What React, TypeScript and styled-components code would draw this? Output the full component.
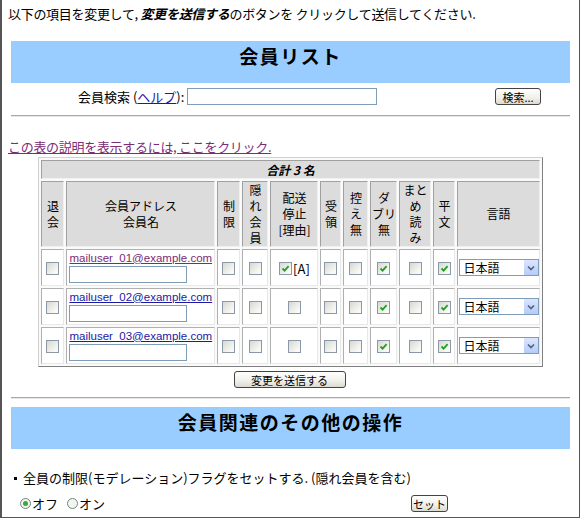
import React from 'react'
import styled, { createGlobalStyle } from 'styled-components'

const GlobalStyle = createGlobalStyle`
  html, body {
    margin: 0;
    padding: 0;
    background: #fff;
  }
  body {
    font-family: "Noto Sans CJK JP", "DejaVu Sans", sans-serif;
    font-size: 13px;
    color: #000;
  }
  * {
    box-sizing: border-box;
  }
`

const Frame = styled.div`
  width: 580px;
  height: 518px;
  border-left: 2px solid #555;
  border-right: 1px solid #555;
  border-bottom: 1px solid #555;
  padding: 0 6px;
  overflow: hidden;
`

const Intro = styled.p`
  margin: 0;
  padding-top: 6px;
  line-height: 16px;
  letter-spacing: -0.3px;
  em {
    font-weight: bold;
    font-style: italic;
  }
`

const SectionBar = styled.div<{ $top: number }>`
  margin: ${({ $top }) => $top}px 3px 0;
  height: 42px;
  background: #99ccff;
  text-align: center;
  padding-top: 3px;
  font-size: 19px;
  font-weight: bold;
  line-height: 24px;
  letter-spacing: 1.5px;
`

const SearchRow = styled.div`
  margin: 5px 3px 0;
  height: 17px;
  display: flex;
  align-items: center;
  justify-content: space-between;
  padding: 0 29px 0 67px;
`

const SearchLabel = styled.label`
  display: flex;
  align-items: center;
  line-height: 17px;
`

const Link = styled.a<{ $visited?: boolean }>`
  color: ${({ $visited }) => ($visited ? '#7b2d74' : '#1a1aa6')};
  text-decoration: underline;
  cursor: pointer;
`

const TextBox = styled.span<{ $w: number }>`
  display: inline-block;
  width: ${({ $w }) => $w}px;
  height: 17px;
  border: 1px solid #7f9db9;
  background: #fff;
`

const XpButton = styled.button<{ $w: number }>`
  width: ${({ $w }) => $w}px;
  height: 17px;
  padding: 0;
  border: 1px solid #444;
  border-radius: 3px;
  background: linear-gradient(#ffffff, #f0efe8 60%, #dcdbd2);
  font-family: "Noto Sans CJK JP", sans-serif;
  font-size: 11px;
  line-height: 14px;
  color: #000;
`

const Rule = styled.hr<{ $top: number }>`
  margin: ${({ $top }) => $top}px 3px 0;
  border: none;
  border-top: 1px solid #a8a8a8;
  border-bottom: 1px solid #e8e8e8;
  height: 0;
`

const HelpLine = styled.div`
  margin-top: 22px;
  line-height: 16px;
  letter-spacing: -0.3px;
`

const MemberTable = styled.table`
  margin: 2px auto 0;
  width: 504px;
  table-layout: fixed;
  border-collapse: separate;
  border-spacing: 2px;
  border: 1px solid;
  border-color: #d0d0d0 #808080 #808080 #d0d0d0;
  background: #fafafa;
`

const TotalCell = styled.th`
  background: #dcdcdc;
  border: 1px solid;
  border-color: #a0a0a0 #f0f0f0 #f0f0f0 #a0a0a0;
  height: 19px;
  font-style: italic;
  font-weight: bold;
  font-size: 12px;
  padding: 0;
  line-height: 16px;
`

const HeadCell = styled.th`
  background: #dcdcdc;
  border: 1px solid;
  border-color: #a0a0a0 #f0f0f0 #f0f0f0 #a0a0a0;
  font-weight: normal;
  font-size: 12px;
  line-height: 16px;
  height: 66px;
  padding: 0;
  text-align: center;
  vertical-align: middle;
`

const Cell = styled.td<{ $left?: boolean }>`
  background: #fff;
  border: 1px solid;
  border-color: #b0b0b0 #e8e8e8 #e8e8e8 #b0b0b0;
  height: 37px;
  padding: 0 0 0 ${({ $left }) => ($left ? '2px' : '0')};
  text-align: ${({ $left }) => ($left ? 'left' : 'center')};
  vertical-align: middle;
  line-height: 15px;
`

const AddressLink = styled(Link)`
  display: block;
  font-family: "Liberation Sans", Arial, sans-serif;
  font-size: 11.5px;
  line-height: 15px;
`

const Box = styled.span`
  display: inline-flex;
  align-items: center;
  justify-content: center;
  width: 13px;
  height: 13px;
  vertical-align: middle;
  border: 1px solid #8a98a8;
  background: linear-gradient(135deg, #d8d8d2, #f8f8f6 80%);
`

const Reason = styled.span`
  display: inline-flex;
  align-items: center;
  gap: 1px;
  font-size: 13px;
`

const Select = styled.div`
  display: flex;
  align-items: center;
  justify-content: space-between;
  width: 80px;
  height: 17px;
  margin-left: 1px;
  border: 1px solid #7f9db9;
  background: #fff;
  padding-left: 3px;
  font-size: 12px;
`

const SelectArrow = styled.span`
  display: flex;
  align-items: center;
  justify-content: center;
  width: 15px;
  height: 15px;
  background: linear-gradient(#dbe6fd, #b6cbf9);
  border-left: 1px solid #fff;
`

const SubmitRow = styled.div`
  margin-top: 4px;
  display: flex;
  justify-content: center;
  padding-right: 2px;
`

const BulletLine = styled.div`
  margin-top: 21px;
  padding-left: 6px;
  line-height: 16px;
  display: flex;
  align-items: center;
  gap: 6px;
  &::before {
    content: '';
    width: 3px;
    height: 3px;
    background: #000;
  }
`

const RadioRow = styled.div`
  margin-top: 9px;
  display: flex;
  align-items: center;
  padding: 0 125px 0 12px;
  height: 17px;
`

const RadioLabel = styled.span`
  display: inline-flex;
  align-items: center;
  gap: 1px;
  margin-right: 9px;
`

const RadioDot = styled.span<{ $on?: boolean }>`
  display: inline-flex;
  align-items: center;
  justify-content: center;
  width: 11px;
  height: 11px;
  border-radius: 50%;
  border: 1px solid #6f8a7a;
  background: #f4f4f0;
  &::after {
    content: '';
    width: 5px;
    height: 5px;
    border-radius: 50%;
    background: ${({ $on }) => ($on ? '#3ea63e' : 'transparent')};
  }
`

const Spacer = styled.span`
  flex: 1;
`

function Check({ on }: { on?: boolean }) {
  return (
    <Box>
      {on && (
        <svg width="9" height="9" viewBox="0 0 9 9">
          <path d="M1.5 4.5 L3.6 6.6 L7.6 2.2" fill="none" stroke="#21a121" strokeWidth="1.8" />
        </svg>
      )}
    </Box>
  )
}

type Member = { address: string; visited?: boolean; stop?: boolean }

const members: Member[] = [
  { address: 'mailuser_01@example.com', visited: true, stop: true },
  { address: 'mailuser_02@example.com' },
  { address: 'mailuser_03@example.com' },
]

const widths = [23, 149, 23, 26, 48, 21, 25, 27, 32, 22, 82]

export default function App() {
  return (
    <>
      <GlobalStyle />
      <Frame>
        <Intro>
          以下の項目を変更して, <em>変更を送信する</em>のボタンを クリックして送信してください.
        </Intro>

        <SectionBar $top={19}>会員リスト</SectionBar>

        <SearchRow>
          <SearchLabel>
            会員検索 (<Link>ヘルプ</Link>):&nbsp;<TextBox $w={190} />
          </SearchLabel>
          <XpButton $w={46}>検索...</XpButton>
        </SearchRow>

        <Rule $top={10} />

        <HelpLine>
          <Link $visited>この表の説明を表示するには, ここをクリック.</Link>
        </HelpLine>

        <MemberTable>
          <colgroup>
            {widths.map((w, i) => (
              <col key={i} style={{ width: w }} />
            ))}
          </colgroup>
          <thead>
            <tr>
              <TotalCell colSpan={11}>合計 3 名</TotalCell>
            </tr>
            <tr>
              <HeadCell>退<br />会</HeadCell>
              <HeadCell>会員アドレス<br />会員名</HeadCell>
              <HeadCell>制<br />限</HeadCell>
              <HeadCell>隠<br />れ<br />会<br />員</HeadCell>
              <HeadCell>配送<br />停止<br />[理由]</HeadCell>
              <HeadCell>受<br />領</HeadCell>
              <HeadCell>控<br />え<br />無</HeadCell>
              <HeadCell>ダ<br />ブリ<br />無</HeadCell>
              <HeadCell>まと<br />め<br />読<br />み</HeadCell>
              <HeadCell>平<br />文</HeadCell>
              <HeadCell>言語</HeadCell>
            </tr>
          </thead>
          <tbody>
            {members.map((m) => (
              <tr key={m.address}>
                <Cell><Check /></Cell>
                <Cell $left>
                  <AddressLink $visited={m.visited}>{m.address}</AddressLink>
                  <TextBox $w={118} />
                </Cell>
                <Cell><Check /></Cell>
                <Cell><Check /></Cell>
                <Cell>
                  {m.stop ? (
                    <Reason><Check on />[A]</Reason>
                  ) : (
                    <Check />
                  )}
                </Cell>
                <Cell><Check /></Cell>
                <Cell><Check /></Cell>
                <Cell><Check on /></Cell>
                <Cell><Check /></Cell>
                <Cell><Check on /></Cell>
                <Cell>
                  <Select>
                    日本語
                    <SelectArrow>
                      <svg width="8" height="6" viewBox="0 0 8 6">
                        <path d="M1 1.5 L4 4.5 L7 1.5" fill="none" stroke="#4d6185" strokeWidth="1.6" />
                      </svg>
                    </SelectArrow>
                  </Select>
                </Cell>
              </tr>
            ))}
          </tbody>
        </MemberTable>

        <SubmitRow>
          <XpButton $w={112}>変更を送信する</XpButton>
        </SubmitRow>

        <Rule $top={9} />

        <SectionBar $top={8}>会員関連のその他の操作</SectionBar>

        <BulletLine>全員の制限(モデレーション)フラグをセットする. (隠れ会員を含む)</BulletLine>

        <RadioRow>
          <RadioLabel><RadioDot $on />オフ</RadioLabel>
          <RadioLabel><RadioDot />オン</RadioLabel>
          <Spacer />
          <XpButton $w={37}>セット</XpButton>
        </RadioRow>
      </Frame>
    </>
  )
}
